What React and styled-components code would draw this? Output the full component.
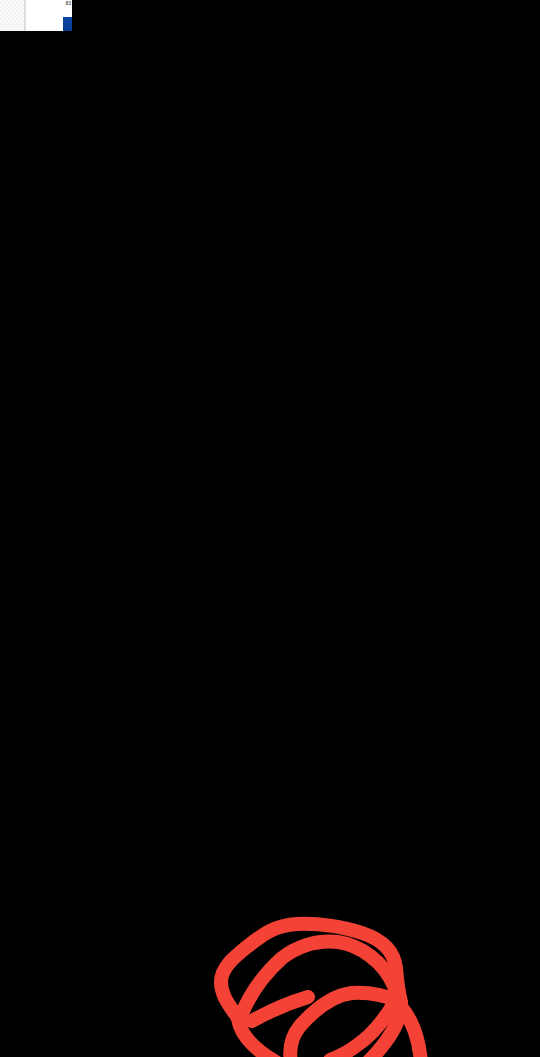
import React from 'react';
import styled, { createGlobalStyle } from 'styled-components';

const GlobalStyle = createGlobalStyle`
	html, body {
		margin: 0;
		padding: 0;
		background: #000;
	}
`

const Page = styled.div`
	position: relative;
	width: 540px;
	height: 1057px;
	overflow: hidden;
	background: #000;
`

const Thumb = styled.div`
	display: flex;
	width: 72px;
	height: 31px;
	background: #fff;
`

const Pattern = styled.div`
	width: 24px;
	background-color: #f8f8f8;
	background-image: repeating-conic-gradient(#f3f3f3 0 25%, #fbfbfb 0 50%);
	background-size: 4px 4px;
	border-right: 2px solid #dedede;
`

const ThumbBody = styled.div`
	flex: 1;
	display: flex;
	flex-direction: column;
	align-items: flex-end;
	justify-content: space-between;
`

const Tiny = styled.span`
	font-family: "Liberation Sans", Arial, sans-serif;
	font-size: 5px;
	line-height: 6px;
	color: #222;
	padding-right: 1px;
`

const BlueTab = styled.div`
	width: 9px;
	height: 14px;
	background: linear-gradient(to bottom, #0d47a8, #0a3a90);
`

const Scribble = styled.svg`
	position: absolute;
	left: 0;
	top: 0;
	width: 540px;
	height: 1057px;
	fill: none;
	stroke: #f44336;
	stroke-width: 14;
	stroke-linecap: round;
	stroke-linejoin: round;
`

const App = () => {
	return (
		<Page>
			<GlobalStyle />
			<Thumb>
				<Pattern />
				<ThumbBody>
					<Tiny>83</Tiny>
					<BlueTab />
				</ThumbBody>
			</Thumb>
			<Scribble viewBox="0 0 540 1057">
				{/* tick */}
				<path d="M308 997 C288 1003 268 1012 252 1021" />
				{/* outer loop */}
				<path d="M238 1018 C230 1006 221 996 221 982 C221 968 234 957 248 946 C262 935 275 925 297 924 C320 923 345 927 362 933 C380 939 394 950 396 968 C397 980 398 990 401 1002 C402 1020 388 1042 368 1062" />
				{/* second arc */}
				<path d="M241 1016 C248 998 262 976 282 958 C298 946 318 940 338 942 C360 945 384 962 394 986 L398 1000" />
				{/* lower left tail */}
				<path d="M238 1018 C240 1034 252 1048 276 1062" />
				{/* inner loop */}
				<path d="M398 1001 C384 995 368 992 352 993 C334 995 316 1008 300 1026 C291 1037 289 1050 291 1062" />
				<path d="M396 1000 C388 1014 374 1034 356 1046 C348 1052 340 1056 330 1060" />
				{/* right tail */}
				<path d="M402 1008 C412 1020 419 1040 421 1062" />
			</Scribble>
		</Page>
	)
}

export default App;
